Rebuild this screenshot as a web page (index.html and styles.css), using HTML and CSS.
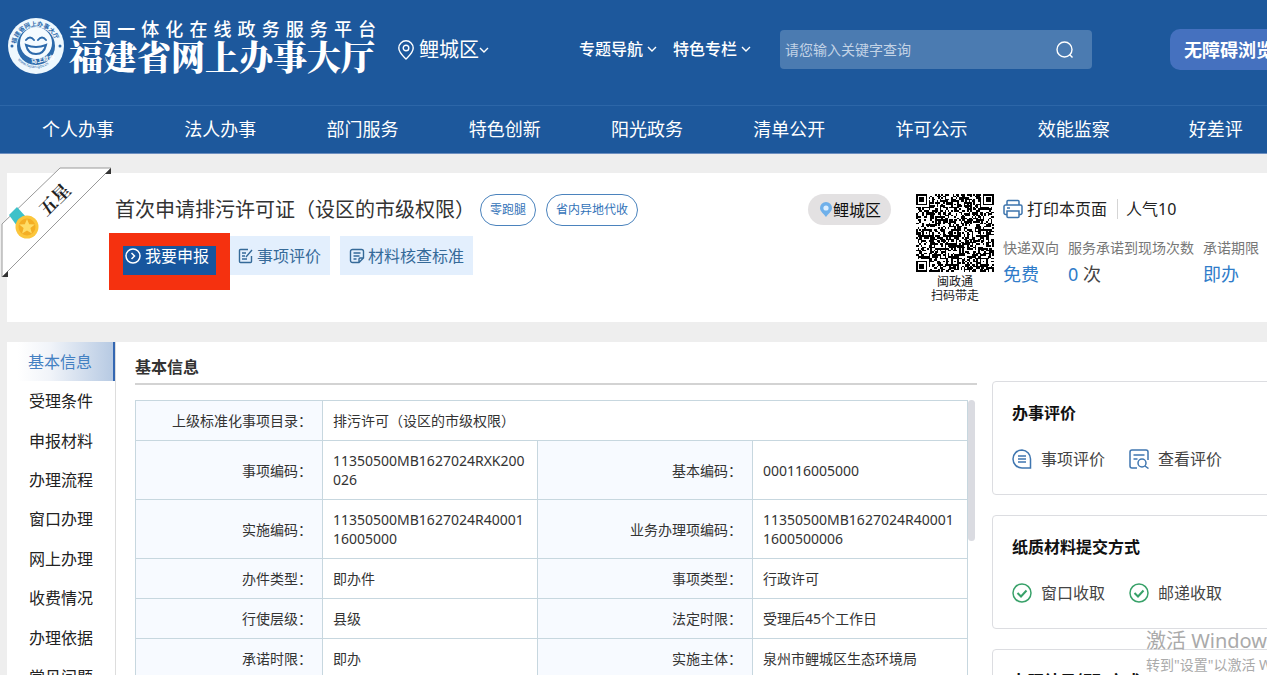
FILE: index.html
```html
<!DOCTYPE html>
<html lang="zh-CN">
<head>
<meta charset="utf-8">
<title>福建省网上办事大厅</title>
<link rel="stylesheet" href="styles.css">
</head>
<body>
<div class="page">
  <header class="header">
    <div class="topbar">
      <a class="brand" href="#">
        <svg class="brand-logo" viewBox="0 0 58 58" aria-hidden="true">
          <defs><path id="arc" d="M9 29a20 20 0 0 1 40 0"/><path id="arc2" d="M5.500 32a24 24 0 0 0 47 0"/></defs>
          <circle cx="29" cy="29" r="28" fill="#eef8fe"/>
          <circle cx="29" cy="29" r="19" fill="#2c6aab"/>
          <circle cx="29" cy="26" r="16" fill="#f4fbff"/>
          <g fill="none" stroke="#2c6aab" stroke-width="2" stroke-linecap="round"><path d="M19 23q4-5 8 0M31 23q4-5 8 0"/><path d="M19 28q10 4 20 0q-2 9-10 9t-10-9z"/></g>
          <text class="logo-ring"><textPath href="#arc" startOffset="2">福建省网上办事大厅</textPath></text>
          <text class="logo-url"><textPath href="#arc2" startOffset="12">www.fujian.gov.cn</textPath></text>
          <text class="logo-foot" x="24" y="46" transform="rotate(-12 29 44)">马上就办</text>
          <circle cx="5" cy="29" r="1.500" fill="#2c6aab"/><circle cx="53" cy="29" r="1.500" fill="#2c6aab"/>
        </svg>
        <span class="brand-text"><span class="brand-sub">全国一体化在线政务服务平台</span><span class="brand-name">福建省网上办事大厅</span></span>
      </a>
      <button class="region" type="button">
        <svg width="16" height="20" viewBox="0 0 16 20" aria-hidden="true"><path d="M8 19C5 16 .8 12.500.8 8a7.200 7.200 0 0 1 14.400 0c0 4.500-4.200 8-7.200 11z"/><circle cx="8" cy="8" r="2.800"/></svg>
        <span>鲤城区</span>
        <svg width="10" height="6" viewBox="0 0 10 6" aria-hidden="true"><path d="M1 1l4 4 4-4"/></svg>
      </button>
      <div class="menus">
        <button class="menu" type="button">专题导航<svg width="10" height="6" viewBox="0 0 10 6" aria-hidden="true"><path d="M1 1l4 4 4-4"/></svg></button>
        <button class="menu" type="button">特色专栏<svg width="10" height="6" viewBox="0 0 10 6" aria-hidden="true"><path d="M1 1l4 4 4-4"/></svg></button>
      </div>
      <form class="search">
        <input type="text" aria-label="关键字" placeholder="请您输入关键字查询">
        <button type="button" aria-label="搜索"><svg width="18" height="18" viewBox="0 0 18 18" aria-hidden="true"><circle cx="8.500" cy="8.500" r="7.500"/><path d="M13.500 13.500l3 3"/></svg></button>
      </form>
      <button class="access" type="button">无障碍浏览</button>
    </div>
    <nav class="nav">
      <a href="#">个人办事</a><a href="#">法人办事</a><a href="#">部门服务</a><a href="#">特色创新</a><a href="#">阳光政务</a><a href="#">清单公开</a><a href="#">许可公示</a><a href="#">效能监察</a><a href="#">好差评</a>
    </nav>
  </header>

  <section class="summary">
    <svg class="ribbon" width="118" height="116" viewBox="0 0 118 116" role="img" aria-label="五星">
      <path d="M60 3H111L2 112V59z" fill="#fff" stroke="#9a9a9a"/>
      <path d="M111 3v6h-6zM2 112l6-6v6z" fill="#333"/>
      <path d="M9 50l8-8 9 10-9 9z" fill="#3ec1c9"/>
      <circle cx="27" cy="62" r="11.500" fill="#fbc63c"/><circle cx="27" cy="62" r="8.500" fill="#f4ae24"/>
      <path d="M27 54l2.200 5.300 5.600.2-4.400 3.600 1.500 5.500-4.900-3-4.900 3 1.500-5.500-4.400-3.600 5.600-.2z" fill="#ffdd66"/>
      <text x="55" y="41" transform="rotate(-45 55 35)">五星</text>
    </svg>
    <div class="summary-main">
      <div class="title-row"><h1>首次申请排污许可证（设区的市级权限）</h1><span class="tag">零跑腿</span><span class="tag">省内异地代收</span></div>
      <div class="actions">
        <button class="apply" type="button"><svg width="16" height="16" viewBox="0 0 16 16" aria-hidden="true"><circle cx="8" cy="8" r="7"/><path d="M6.500 5l3 3-3 3"/></svg>我要申报</button>
        <button class="action" type="button"><svg width="16" height="16" viewBox="0 0 16 16" aria-hidden="true"><path d="M10 1.500H2.500a1 1 0 0 0-1 1v11a1 1 0 0 0 1 1h10a1 1 0 0 0 1-1V8M4 5h4M4 8h3M4 11h5M8 9l6-7"/></svg>事项评价</button>
        <button class="action" type="button"><svg width="16" height="16" viewBox="0 0 16 16" aria-hidden="true"><path d="M10 14.500H3.500a2 2 0 0 1-2-2v-9a2 2 0 0 1 2-2h9a2 2 0 0 1 2 2V10zM10 14.500V11a1 1 0 0 1 1-1h3.500M4.500 5h7M4.500 8h6M4.500 11h3"/></svg>材料核查标准</button>
      </div>
    </div>
    <span class="place"><svg width="12" height="15" viewBox="0 0 12 15" aria-hidden="true"><path d="M6 15C4 12 0 9.500 0 6a6 6 0 0 1 12 0c0 3.500-4 6-6 9z" fill="#6fb0ea"/><circle cx="6" cy="6" r="2.600" fill="#dceeff"/></svg>鲤城区</span>
    <figure class="qr"><svg id="qr" viewBox="0 0 49 49" role="img" aria-label="闽政通二维码" shape-rendering="crispEdges"></svg><figcaption>闽政通<br>扫码带走</figcaption></figure>
    <div class="facts">
      <div class="facts-top">
        <button class="print" type="button"><svg width="20" height="20" viewBox="0 0 20 20" aria-hidden="true"><path d="M4 6V2.500a1 1 0 0 1 1-1h10a1 1 0 0 1 1 1V6M4 15.500H2.500a1.500 1.500 0 0 1-1.500-1.500V7.500A1.500 1.500 0 0 1 2.500 6h15A1.500 1.500 0 0 1 19 7.500V14a1.500 1.500 0 0 1-1.500 1.500H16M4 12h12v5.500a1 1 0 0 1-1 1H5a1 1 0 0 1-1-1zM4 9h3"/></svg>打印本页面</button>
        <span class="views">人气10</span>
      </div>
      <dl>
        <div><dt>快递双向</dt><dd>免费</dd></div>
        <div><dt>服务承诺到现场次数</dt><dd>0 <span>次</span></dd></div>
        <div><dt>承诺期限</dt><dd>即办</dd></div>
      </dl>
    </div>
  </section>

  <div class="content">
    <nav class="side">
      <a class="active" href="#">基本信息</a><a href="#">受理条件</a><a href="#">申报材料</a><a href="#">办理流程</a><a href="#">窗口办理</a><a href="#">网上办理</a><a href="#">收费情况</a><a href="#">办理依据</a><a href="#">常见问题</a>
    </nav>
    <main class="detail">
      <h2>基本信息</h2>
      <div class="table-wrap">
        <table>
          <colgroup><col class="c-label"><col class="c-value"><col class="c-value"><col class="c-value"></colgroup>
          <tbody>
          <tr><th scope="row">上级标准化事项目录：</th><td colspan="3">排污许可（设区的市级权限）</td></tr>
          <tr><th scope="row">事项编码：</th><td>11350500MB1627024RXK200026</td><th scope="row">基本编码：</th><td>000116005000</td></tr>
          <tr><th scope="row">实施编码：</th><td>11350500MB1627024R4000116005000</td><th scope="row">业务办理项编码：</th><td>11350500MB1627024R400011600500006</td></tr>
          <tr><th scope="row">办件类型：</th><td>即办件</td><th scope="row">事项类型：</th><td>行政许可</td></tr>
          <tr><th scope="row">行使层级：</th><td>县级</td><th scope="row">法定时限：</th><td>受理后45个工作日</td></tr>
          <tr><th scope="row">承诺时限：</th><td>即办</td><th scope="row">实施主体：</th><td>泉州市鲤城区生态环境局</td></tr>
          </tbody>
        </table>
        <div class="thumb"></div>
      </div>
    </main>
    <aside class="cards">
      <section class="card"><h3>办事评价</h3><div class="card-links">
        <a href="#"><svg class="blue" width="20" height="20" viewBox="0 0 20 20" aria-hidden="true"><path d="M10 1a9 9 0 1 0 0 18h8.500v-8.500A9 9 0 0 0 10 1zM6 7h8M6 10h8M6 13h8"/></svg>事项评价</a>
        <a href="#"><svg class="blue" width="20" height="20" viewBox="0 0 20 20" aria-hidden="true"><path d="M8 19H3a2 2 0 0 1-2-2V3a2 2 0 0 1 2-2h14a2 2 0 0 1 2 2v8M4.500 6h11M4.500 10h4M16 17l3.500 2.500"/><circle cx="13" cy="14" r="4"/></svg>查看评价</a></div></section>
      <section class="card"><h3>纸质材料提交方式</h3><div class="card-links">
        <a href="#"><svg class="green" width="20" height="20" viewBox="0 0 20 20" aria-hidden="true"><circle cx="10" cy="10" r="9"/><path class="tick" d="M5.500 10l3.500 3.500 5.500-6"/></svg>窗口收取</a>
        <a href="#"><svg class="green" width="20" height="20" viewBox="0 0 20 20" aria-hidden="true"><circle cx="10" cy="10" r="9"/><path class="tick" d="M5.500 10l3.500 3.500 5.500-6"/></svg>邮递收取</a></div></section>
      <section class="card"><h3>办理结果领取方式</h3></section>
    </aside>
  </div>
  <div class="watermark"><p class="wm-big">激活 Windows</p><p>转到"设置"以激活 Windows。</p></div>
</div>
<script src="script.js"></script>
</body>
</html>
```
FILE: styles.css
```css
* { box-sizing: border-box; }
body, h1, h2, h3, p, dl, dd, figure { margin: 0; }
body {
  font-family: "Noto Sans", "Noto Sans CJK SC", sans-serif;
  font-size: 16px;
  line-height: 20px;
  color: #333;
  background: #eee;
  text-spacing-trim: space-all;
}
a { color: inherit; text-decoration: none; }
button { flex: none; padding: 0; border: 0; background: none; font: inherit; color: inherit; white-space: nowrap; cursor: pointer; }
svg { flex: none; fill: none; }
.page { position: relative; height: 100vh; overflow: hidden; }

.header { min-width: 1287px; color: #fff; background: #1d589c; border-bottom: 1px solid #6d8fc0; }
.topbar { display: flex; align-items: center; height: 105px; padding: 0 0 6px 7px; }
.brand { display: flex; flex: none; align-items: center; gap: 4px; padding-bottom: 7px; }
.brand-logo { width: 58px; height: 58px; }
.logo-ring { font-size: 6px; font-weight: 700; fill: #2c6aab; }
.logo-url { font-size: 4px; fill: #2c6aab; }
.logo-foot { font-size: 6px; font-weight: 700; fill: #fff; }
.brand-text { display: flex; flex-direction: column; width: 307px; }
.brand-sub { font-size: 18px; font-weight: 500; line-height: 20px; text-align-last: justify; }
.brand-name { font-family: "Noto Serif CJK SC", "Noto Sans CJK SC", serif; font-size: 34px; font-weight: 900; line-height: 34px; white-space: nowrap; }
.region { display: flex; align-items: center; gap: 5px; margin-left: 22px; font-size: 20px; }
.region span { margin-right: -5px; }
.region svg, .menu svg, .search svg { stroke: #fff; stroke-width: 1.400; }
.menus { display: flex; flex: none; gap: 16px; margin-left: 90px; padding-bottom: 2px; }
.menu { display: flex; align-items: center; gap: 4px; font-weight: 500; }
.search { display: flex; flex: none; align-items: center; width: 312px; height: 39px; margin-left: 29px; padding: 0 18px 0 5px; border-radius: 4px; background: #4b7bb1; }
.search input { flex: 1; min-width: 0; padding: 0; border: 0; outline: 0; background: none; font: inherit; font-size: 14px; color: #fff; }
.search input::placeholder { color: #c3d3e6; }
.search button { display: flex; }
.access { height: 41px; margin-left: 78px; padding: 0 14px; border-radius: 10px; background: #4571bf; font-size: 18px; font-weight: 700; }
.nav { display: flex; padding-left: 7px; border-top: 1px solid #2c66a8; }
.nav a { flex: 1; line-height: 47px; font-size: 18px; text-align: center; }

.summary { position: relative; display: flex; align-items: flex-start; min-width: 1280px; height: 149px; margin: 19px 0 20px 7px; padding-top: 21px; background: #fff; }
.ribbon { position: absolute; left: -7px; top: -8px; }
.ribbon text { font-family: "Noto Serif CJK SC", "Noto Sans CJK SC", serif; font-size: 18px; font-weight: 700; fill: #222; text-anchor: middle; }
.summary-main { width: 693px; margin-left: 108px; }
.title-row { display: flex; align-items: center; }
h1 { margin-right: 5px; font-size: 20px; font-weight: 400; line-height: 28px; }
.tag { margin-right: 10px; padding: 0 9px; border: 1px solid #4b83bd; border-radius: 16px; font-size: 12px; line-height: 30px; color: #3272b8; }
.actions { display: flex; align-items: flex-end; gap: 10px; margin-top: 10px; }
.apply, .action { display: flex; align-items: center; gap: 4px; line-height: 20px; }
.apply { position: relative; height: 29px; margin-left: 8px; padding: 0 7px 9px 2px; background: #17569e; color: #fff; }
.apply::before { content: ""; position: absolute; inset: -13px -14px -15px; border: solid #f5310f; border-width: 13px 14px 15px; }
.apply svg { stroke: #fff; stroke-width: 1.500; }
.action { gap: 3px; height: 39px; padding: 0 9px; background: #e3effd; color: #356a99; }
.apply + .action { margin-left: 4px; padding-left: 8px; }
.action svg { stroke: #356a99; stroke-width: 1.400; }
.place { display: flex; align-items: center; gap: 1px; height: 31px; padding: 0 10px 0 12px; border-radius: 16px; background: #e3e1e2; color: #111; }
.qr { width: 78px; margin-left: 25px; font-size: 12px; line-height: 14px; text-align: center; color: #222; }
.qr svg { display: block; width: 78px; height: 78px; margin-bottom: 3px; }
.facts { margin-left: 9px; }
.facts-top { display: flex; align-items: center; height: 30px; color: #222; }
.print { display: flex; align-items: center; gap: 4px; padding-right: 10px; border-right: 1px solid #d5d5d5; }
.print svg { stroke: #3c74ad; stroke-width: 1.500; }
.views { padding-left: 8px; }
dl { display: flex; gap: 9px; margin-top: 14px; white-space: nowrap; }
dt { font-size: 14px; color: #777; }
dd { margin-top: 4px; font-size: 18px; line-height: 24px; color: #2f7cc9; }
dd span { color: #444; }

.content { display: grid; grid-template-columns: 109px 1fr 295px; min-width: 1280px; margin-left: 7px; background: #fff; }
.side { display: flex; flex-direction: column; height: 355px; border-right: 1px solid #ddd; color: #222; }
.side a { display: flex; flex: 1; align-items: center; justify-content: center; }
.side .active { border-right: 2px solid #3467b2; background: linear-gradient(90deg, #fff 10%, #f1f4f9 40%, #b7cae3); color: #4380c2; }
.detail { padding: 0 15px 0 19px; }
h2 { padding: 15px 0 6px; border-bottom: 2px solid #d3d3d3; font-size: 16px; line-height: 20px; }
.table-wrap { position: relative; margin-top: 15px; padding-right: 9px; }
table { width: 100%; border-collapse: collapse; table-layout: fixed; font-size: 14px; line-height: 19px; }
.c-label { width: 187px; }
th, td { padding: 10px; border: 1px solid #c7d7df; font-weight: 400; word-break: break-all; }
th { background: #f7faff; text-align: right; }
.thumb { position: absolute; top: 0; right: 2px; width: 7px; height: 141px; border-radius: 4px; background: #dadbe1; }
.cards { display: flex; flex-direction: column; gap: 20px; padding-top: 39px; }
.card { min-height: 114px; padding: 21px 19px 25px; border: 1px solid #dcdde1; border-radius: 4px; }
h3 { font-size: 16px; line-height: 20px; color: #111; }
.card-links { display: flex; gap: 24px; margin-top: 26px; color: #444; }
.card-links a { display: flex; align-items: center; gap: 9px; }
.blue { stroke: #3f76b0; stroke-width: 1.500; }
.green { stroke: #38a169; stroke-width: 1.500; }
.tick { stroke-width: 2; }

.watermark { position: absolute; left: 1146px; bottom: 0; font-size: 14px; line-height: 20px; color: #aaa; white-space: nowrap; }
.wm-big { font-size: 20px; line-height: 28px; }
```
FILE: script.js
```js
// Draws the QR code modules: three finders, alignment marks and the data area.
(function () {
  var n = 49, seed = 77, d = "";
  var centres = [6, 24, 42];
  function finder(x, y) {
    var fx = x < 8 ? x : x > n - 9 ? n - 1 - x : -1;
    var fy = y < 8 ? y : y > n - 9 ? n - 1 - y : -1;
    if (fx < 0 || fy < 0 || (x > n - 9 && y > n - 9)) return null;
    if (fx === 7 || fy === 7) return false;
    var r = Math.max(Math.abs(fx - 3), Math.abs(fy - 3));
    return r !== 2;
  }
  function align(x, y) {
    for (var i = 0; i < 3; i++) for (var j = 0; j < 3; j++) {
      var r = Math.max(Math.abs(x - centres[i]), Math.abs(y - centres[j]));
      if (r < 3) return r !== 1;
    }
    return null;
  }
  for (var y = 0; y < n; y++) for (var x = 0; x < n; x++) {
    seed = (seed * 1103515245 + 12345) % 2147483648;
    var on = finder(x, y);
    if (on === null) on = align(x, y);
    if (on === null) on = (seed >> 16) % 100 < 52;
    if (on) d += "M" + x + " " + y + "h1v1h-1z";
  }
  var p = document.createElementNS("http://www.w3.org/2000/svg", "path");
  p.setAttribute("d", d);
  p.setAttribute("fill", "#000");
  document.getElementById("qr").appendChild(p);
})();
```
